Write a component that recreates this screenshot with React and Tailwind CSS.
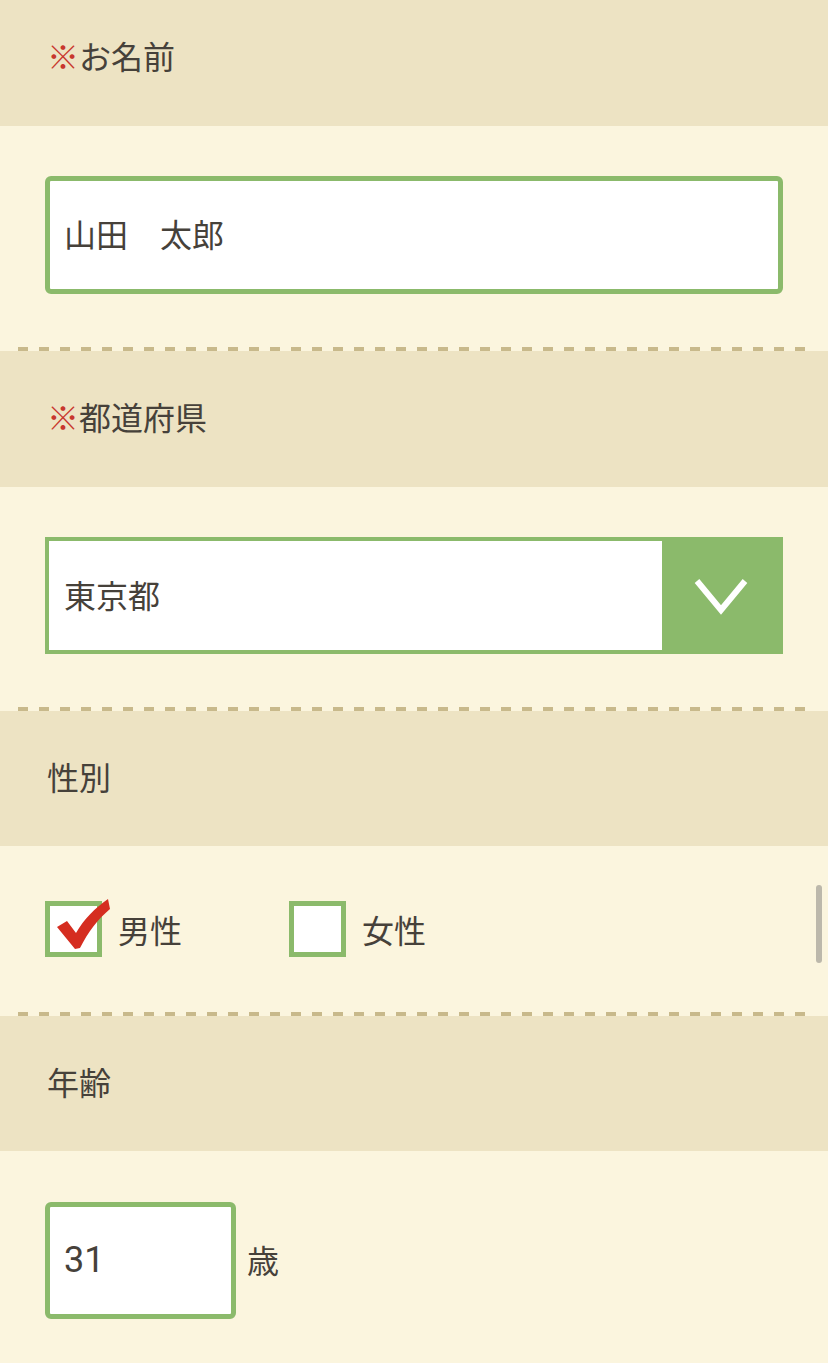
import React from 'react';

const font = { fontFamily: '"Noto Sans CJK JP", "Noto Sans", sans-serif' };

function Label({ required, children, className = '' }) {
  return (
    <div className={`flex items-center bg-[#ede3c3] pl-[47px] text-[32px] text-[#46413a] ${className}`}>
      {required && <span className="text-[#c8372d]">※</span>}
      <span>{children}</span>
    </div>
  );
}

function Dashes() {
  return (
    <div className="bg-[#fbf5de] px-[18px]">
      <div className="h-[4px] bg-[repeating-linear-gradient(90deg,#c8b98b_0_10px,transparent_10px_21px)]" />
    </div>
  );
}

function Checkbox({ checked, label, className = '' }) {
  return (
    <div className={`flex items-center ${className}`}>
      <div className="relative w-[57px] h-[56px] border-[5px] border-[#8bba6b] bg-white">
        {checked && (
          <svg className="absolute left-[3px] -top-[10px]" width="58" height="58" viewBox="0 0 58 58">
            <path d="M4 31 L14 25 L23 37 C31 23 42 12 55 3 L57 13 C45 23 35 36 27 52 L22 53 Z" fill="#d52d20" />
          </svg>
        )}
      </div>
      <span className="ml-[16px] text-[32px] text-[#46413a]">{label}</span>
    </div>
  );
}

export default function App() {
  return (
    <div className="relative w-[828px] h-[1363px] overflow-hidden bg-[#fbf5de]" style={font}>
      <Label required className="h-[126px] pb-[16px]">お名前</Label>
      <div className="h-[221px] px-[45px] pt-[50px]">
        <div className="h-[118px] flex items-center rounded-[6px] border-[5px] border-[#8bba6b] bg-white pl-[14px] pb-[4px] text-[32px] text-[#46413a]">
          山田　太郎
        </div>
      </div>
      <Dashes />

      <Label required className="h-[136px] pb-[6px]">都道府県</Label>
      <div className="h-[220px] px-[45px] pt-[50px]">
        <div className="h-[117px] flex border-[4px] border-[#8bba6b] bg-white">
          <div className="flex-1 flex items-center pl-[15px] pb-[4px] text-[32px] text-[#46413a]">東京都</div>
          <div className="w-[117px] bg-[#8bba6b] flex items-center justify-center">
            <svg width="54" height="40" viewBox="0 0 54 40">
              <polyline points="3,5 27,34 51,5" fill="none" stroke="#ffffff" strokeWidth="6" />
            </svg>
          </div>
        </div>
      </div>
      <Dashes />

      <Label className="h-[135px] pb-[6px]">性別</Label>
      <div className="h-[166px] px-[45px] pt-[55px]">
        <div className="flex">
          <Checkbox checked label="男性" className="w-[244px]" />
          <Checkbox label="女性" />
        </div>
      </div>
      <Dashes />

      <Label className="h-[135px] pb-[6px]">年齢</Label>
      <div className="px-[45px] pt-[51px]">
        <div className="flex items-center">
          <div className="w-[191px] h-[117px] flex items-center rounded-[6px] border-[5px] border-[#8bba6b] bg-white pl-[14px] pb-[2px] text-[36px] text-[#46413a] font-[Roboto,sans-serif]">
            31
          </div>
          <span className="ml-[11px] pb-[4px] text-[32px] text-[#46413a]">歳</span>
        </div>
      </div>

      <div className="absolute left-[816px] top-[885px] w-[6px] h-[78px] rounded-full bg-[#bcb8ab]" />
    </div>
  );
}
